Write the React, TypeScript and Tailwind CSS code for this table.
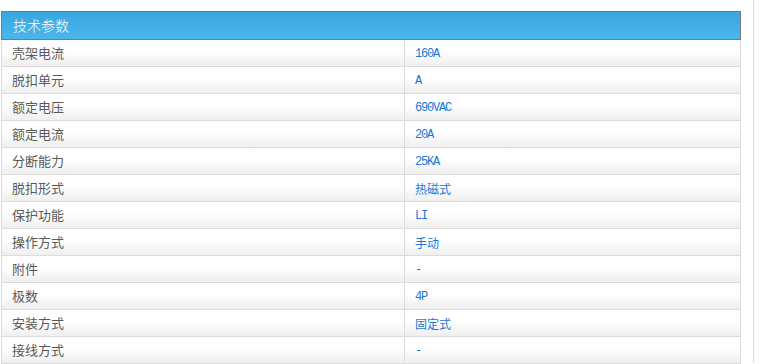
const rows: [string, string][] = [
  ["壳架电流", "160A"],
  ["脱扣单元", "A"],
  ["额定电压", "690VAC"],
  ["额定电流", "20A"],
  ["分断能力", "25KA"],
  ["脱扣形式", "热磁式"],
  ["保护功能", "LI"],
  ["操作方式", "手动"],
  ["附件", "-"],
  ["极数", "4P"],
  ["安装方式", "固定式"],
  ["接线方式", "-"],
];

export default function App() {
  return (
    <div className="flex w-[769px] h-[364px] overflow-hidden bg-white">
      {/* Spec table */}
      <div className="ml-[1px] mt-[11px] w-[740px] flex flex-col">
        <div className="h-[29px] flex items-center pl-[11px] border border-[#7a7a7a] bg-gradient-to-b from-[#37a6e1] to-[#4bb6ea] text-white text-[14px] font-light font-['Noto_Sans_CJK_SC',sans-serif]">
          技术参数
        </div>
        {rows.map(([label, value]) => (
          <div
            key={label}
            className="h-[27px] flex border-x border-b border-[#dcdcdc] bg-gradient-to-b from-white from-40% to-[#efefef]"
          >
            <div className="w-[403px] flex items-center pl-[10px] border-r border-[#dcdcdc] text-[13px] text-[#5a5a5a] font-['Noto_Sans_CJK_SC',sans-serif]">
              {label}
            </div>
            <div
              className={
                /^[\x00-\x7f]*$/.test(value)
                  ? "flex-1 flex items-center pl-[10px] pt-[2px] text-[12px] tracking-[-1.2px] text-[#1a78d6] font-['Liberation_Mono',monospace]"
                  : "flex-1 flex items-center pl-[10px] pt-[2px] text-[12px] text-[#1a78d6] font-['Noto_Sans_CJK_SC',sans-serif]"
              }
            >
              {value}
            </div>
          </div>
        ))}
      </div>
      {/* Scroll divider */}
      <div className="ml-[12px] w-px h-[363px] bg-[#dcdcdc]" />
    </div>
  );
}
